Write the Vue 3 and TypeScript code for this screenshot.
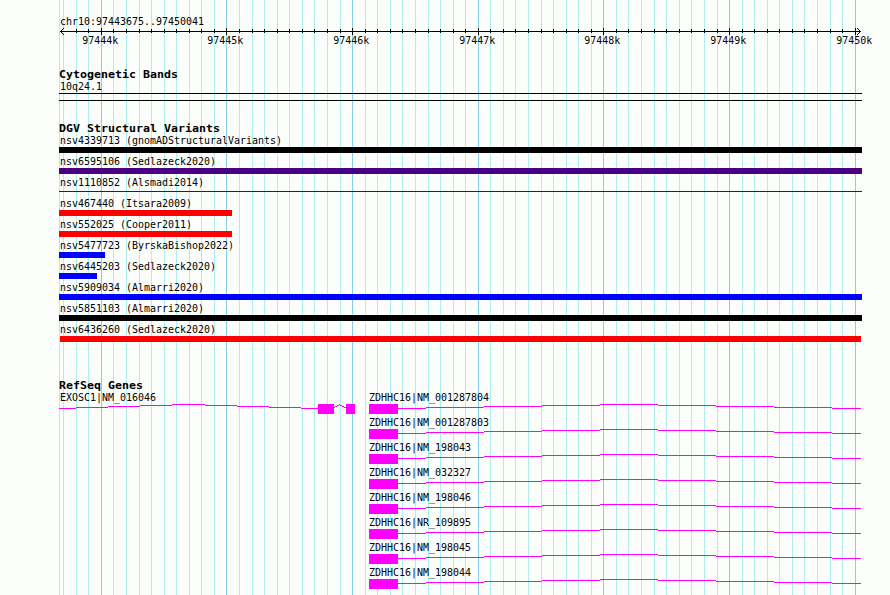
<script setup lang="ts">
interface Variant {
  name: string
  color: string
  start: number
  width: number
  thin?: boolean
}

const majors = [101, 226, 352, 478, 603, 729, 855]
const minors = [
  59, 63, 76, 88, 113, 126, 139, 151, 164, 176, 189, 201, 214, 239, 252, 264, 277, 289, 302, 314,
  327, 340, 365, 377, 390, 402, 415, 428, 440, 453, 465, 490, 503, 515, 528, 541, 553, 566, 578,
  591, 616, 628, 641, 654, 666, 679, 691, 704, 717, 742, 754, 767, 779, 792, 804, 817, 830, 842,
]
const ticks = minors.filter((x) => x > 63)

const variants: Variant[] = [
  { name: 'nsv4339713 (gnomADStructuralVariants)', color: '#000000', start: 0, width: 803 },
  { name: 'nsv6595106 (Sedlazeck2020)', color: '#4b0082', start: 0, width: 803 },
  { name: 'nsv1110852 (Alsmadi2014)', color: '#4b0082', start: 0, width: 803, thin: true },
  { name: 'nsv467440 (Itsara2009)', color: '#ff0000', start: 0, width: 173 },
  { name: 'nsv552025 (Cooper2011)', color: '#ff0000', start: 0, width: 173 },
  { name: 'nsv5477723 (ByrskaBishop2022)', color: '#0000ff', start: 0, width: 46 },
  { name: 'nsv6445203 (Sedlazeck2020)', color: '#0000ff', start: 0, width: 38 },
  { name: 'nsv5909034 (Almarri2020)', color: '#0000ff', start: 0, width: 803 },
  { name: 'nsv5851103 (Almarri2020)', color: '#000000', start: 0, width: 803 },
  { name: 'nsv6436260 (Sedlazeck2020)', color: '#ff0000', start: 1, width: 801 },
]

const transcripts = [
  'NM_001287804', 'NM_001287803', 'NM_198043', 'NM_032327',
  'NM_198046', 'NR_109895', 'NM_198045', 'NM_198044',
]
</script>

<template>
  <main class="browser">
    <svg class="grid" width="890" height="595" shape-rendering="crispEdges">
      <rect v-for="x in minors" :key="x" :x="x" y="0" width="1" height="595" fill="#afeeee" />
      <rect v-for="x in majors" :key="x" :x="x" y="0" width="1" height="595" fill="#87ceeb" />
    </svg>

    <header class="ruler">
      <div class="label">chr10:97443675..97450041</div>
      <svg class="axis" width="890" height="22" viewBox="0 25 890 22" shape-rendering="crispEdges">
        <rect x="60" y="31" width="801" height="1" />
        <rect v-for="x in ticks" :key="x" :x="x" y="29" width="1" height="4" />
        <rect v-for="x in majors" :key="x" :x="x" y="28" width="1" height="7" />
        <path d="M60 31h1v1h-1zM61 30h1v3h-1zM62 29h1v1h-1zM62 33h1v1h-1zM63 28h1v1h-1zM63 34h1v1h-1z" />
        <path d="M860 31h1v1h-1zM859 30h1v3h-1zM858 29h1v1h-1zM858 33h1v1h-1zM857 28h1v1h-1zM857 34h1v1h-1z" />
        <text
          v-for="(x, i) in majors"
          :key="x"
          :x="x - 18.7"
          y="44"
          textLength="36"
          lengthAdjust="spacingAndGlyphs"
        >{{ 97444 + i }}k</text>
      </svg>
    </header>

    <section class="bands">
      <h2>Cytogenetic Bands</h2>
      <div class="label">10q24.1</div>
      <div class="band"></div>
    </section>

    <section class="variants">
      <h2>DGV Structural Variants</h2>
      <div v-for="v in variants" :key="v.name" class="variant">
        <div class="label">{{ v.name }}</div>
        <div
          class="bar"
          :class="{ thin: v.thin }"
          :style="{ width: v.width + 'px', marginLeft: v.start + 'px', background: v.color }"
        ></div>
      </div>
    </section>

    <section class="genes">
      <h2>RefSeq Genes</h2>
      <div class="columns">
        <div class="gene upstream">
          <div class="label">EXOSC1|NM_016046</div>
          <svg width="310" height="12" viewBox="59 403 310 12" fill="#ff00ff" shape-rendering="crispEdges">
            <path d="M59 408h17v1h-17zM76 407h32v1h-32zM108 406h32v1h-32zM140 405h32v1h-32zM172 404h33v1h-33zM205 405h32v1h-32zM237 406h32v1h-32zM269 407h32v1h-32zM301 408h17v1h-17z" />
            <path d="M318 404h16v10h-16zM346 404h9v10h-9z" />
            <path d="M334 407h1v1h-1zM335 406h2v1h-2zM337 405h2v1h-2zM339 404h1v1h-1zM340 405h2v1h-2zM342 406h2v1h-2zM344 407h2v1h-2z" />
          </svg>
        </div>
        <div class="transcripts">
          <div v-for="t in transcripts" :key="t" class="gene">
            <div class="label">ZDHHC16|{{ t }}</div>
            <svg width="493" height="12" viewBox="369 403 493 12" fill="#ff00ff" shape-rendering="crispEdges">
              <path d="M369 404h29v10h-29z" />
              <path d="M398 408h28v1h-28zM426 407h58v1h-58zM484 406h58v1h-58zM542 405h58v1h-58zM600 404h58v1h-58zM658 405h58v1h-58zM716 406h58v1h-58zM774 407h58v1h-58zM832 408h29v1h-29z" />
            </svg>
          </div>
        </div>
      </div>
    </section>
  </main>
</template>

<style>
body {
  margin: 0;
  background: #fcfefc;
}
</style>

<style scoped>
.browser {
  position: relative;
  isolation: isolate;
  box-sizing: border-box;
  width: 890px;
  height: 595px;
  overflow: hidden;
  padding-top: 15px;
  color: #000;
  font-family: 'DejaVu Sans Mono', monospace;
  font-size: 11px;
}
.grid {
  position: absolute;
  inset: 0;
  z-index: -1;
}
svg {
  display: block;
}
.label {
  width: max-content;
  height: 12px;
  line-height: 14px;
  white-space: pre;
  transform: scaleX(0.906);
  transform-origin: left;
  margin-left: 1.4px;
}
.ruler {
  height: 53px;
}
.ruler > .label {
  height: 10px;
  margin-left: 60.4px;
}
.axis {
  font-size: 11px;
}
h2 {
  width: max-content;
  margin: 0;
  height: 12px;
  font-size: 11px;
  line-height: 14px;
  font-weight: bold;
  white-space: pre;
  transform: scaleX(1.057);
  transform-origin: left;
}
.bands,
.variants,
.genes {
  padding-left: 59px;
}
.bands {
  height: 54px;
}
.band {
  box-sizing: border-box;
  width: 803px;
  height: 8px;
  margin-top: 1px;
  border-top: 1px solid #000;
  border-bottom: 1px solid #000;
}
.variants {
  height: 257px;
}
.variant {
  height: 21px;
}
.bar {
  height: 6px;
  margin-top: 1px;
}
.bar.thin {
  height: 1px;
  margin-top: 3px;
}
.columns {
  display: flex;
}
.upstream {
  width: 310px;
}
.gene {
  height: 25px;
}
.transcripts .label {
  margin-left: -0.4px;
}
</style>
